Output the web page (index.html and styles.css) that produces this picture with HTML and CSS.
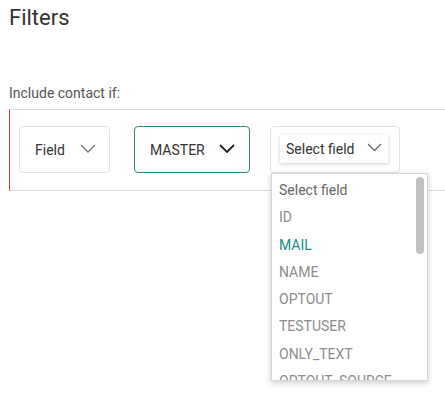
FILE: index.html
```html
<!DOCTYPE html>
<html lang="en">
<head>
    <meta charset="UTF-8">
    <title>Filters</title>
    <link rel="stylesheet" href="styles.css">
</head>
<body>
    <h1 class="title">Filters</h1>
    <div class="label">Include contact if:</div>

    <!-- condition row -->
    <div class="rule">
        <div class="box">
            <span>Field</span>
            <svg class="chev" width="16" height="9" viewBox="0 0 16 9"><path d="M1 1l7 7 7-7" fill="none" stroke="#777" stroke-width="1.3"/></svg>
        </div>
        <div class="box active">
            <span>MASTER</span>
            <svg class="chev" width="16" height="9" viewBox="0 0 16 9"><path d="M1 1l7 7 7-7" fill="none" stroke="#222" stroke-width="1.8"/></svg>
        </div>
        <div class="box wrap">
            <div class="select">
                <span>Select field</span>
                <svg class="chev" width="15" height="9" viewBox="0 0 15 9"><path d="M1 1l6.5 6.5 6.5-6.5" fill="none" stroke="#666" stroke-width="1.3"/></svg>
            </div>
            <!-- open list -->
            <div class="dropdown">
                <ul class="options">
                    <li class="first">Select field</li>
                    <li>ID</li>
                    <li class="picked">MAIL</li>
                    <li>NAME</li>
                    <li>OPTOUT</li>
                    <li>TESTUSER</li>
                    <li>ONLY_TEXT</li>
                    <li>OPTOUT_SOURCE</li>
                </ul>
                <div class="scroll"></div>
            </div>
        </div>
    </div>
</body>
</html>
```
FILE: styles.css
```css
html {
    height: 100%;
}
body {
    font-family: Roboto, "Liberation Sans", sans-serif;
    margin: 0;
    padding: 0 0 0 9px;
    min-height: 100%;
    box-sizing: border-box;
    background-color: #fff;
    color: #333;
}
.title {
    font-size: 22px;
    font-weight: 400;
    margin: 0;
    padding-top: 5px;
    line-height: 26px;
    color: #333;
}
.label {
    font-size: 14px;
    color: #555;
    margin-top: 52px;
    line-height: 20px;
}
.rule {
    margin-top: 6px;
    border-top: 1px solid #ddd;
    border-bottom: 1px solid #ddd;
    border-left: 1px solid #d9382e;
    padding: 16px 0 16px 9px;
    display: flex;
    gap: 24px;
    height: 48px;
}
.box {
    width: 91px;
    height: 47px;
    box-sizing: border-box;
    border: 1px solid #e2e2e2;
    border-radius: 4px;
    display: flex;
    align-items: center;
    justify-content: space-between;
    padding: 0 13px 0 15px;
    font-size: 14px;
    color: #333;
}
.box.active {
    width: 116px;
    border-color: #2e8b78;
    padding: 0 14px 0 15px;
}
.box.wrap {
    width: 130px;
    margin-left: -4px;
    padding: 0 10px 0 9px;
    position: relative;
}
.select {
    width: 108px;
    height: 28px;
    box-sizing: border-box;
    background: #fff;
    box-shadow: 0 1px 4px rgba(0, 0, 0, 0.18);
    display: flex;
    align-items: center;
    justify-content: space-between;
    padding: 0 6px 0 6px;
    margin-top: -2px;
}
.chev {
    display: block;
    margin-top: -3px;
}
.dropdown {
    position: absolute;
    left: 0;
    top: 46px;
    width: 155px;
    height: 206px;
    background: #fff;
    border: 1px solid #d6d6d6;
    box-shadow: 0 2px 6px rgba(0, 0, 0, 0.2);
    overflow: hidden;
    z-index: 5;
}
.options {
    list-style: none;
    margin: 0;
    padding: 3px 0 0 7px;
}
.options li {
    height: 27.3px;
    line-height: 27px;
    font-size: 14px;
    color: #8c8c8c;
}
.options li.first {
    color: #666;
}
.options li.picked {
    color: #168c8c;
}
.scroll {
    position: absolute;
    right: 3px;
    top: 3px;
    width: 8px;
    height: 77px;
    border-radius: 4px;
    background: #c1c1c1;
}
```
